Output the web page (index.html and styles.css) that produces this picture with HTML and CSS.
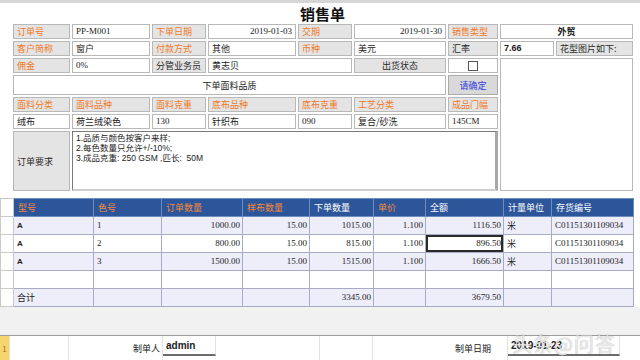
FILE: index.html
```html
<!DOCTYPE html>
<html>
<head>
<meta charset="utf-8">
<link rel="stylesheet" href="styles.css">
</head>
<body>
<div class="topbar"></div>
<h1 class="title">销售单</h1>
<div class="form">
  <div class="c lab">订单号</div>
  <div class="c num l">PP-M001</div>
  <div class="c lab">下单日期</div>
  <div class="c num">2019-01-03</div>
  <div class="c lab">交期</div>
  <div class="c num">2019-01-30</div>
  <div class="c lab">销售类型</div>
  <div class="c bold center span2">外贸</div>

  <div class="c lab">客户简称</div>
  <div class="c">窗户</div>
  <div class="c lab">付款方式</div>
  <div class="c">其他</div>
  <div class="c lab">币种</div>
  <div class="c">美元</div>
  <div class="c lab dark">汇率</div>
  <div class="c bold numb">7.66</div>
  <div class="c lab dark">花型图片如下:</div>

  <div class="c lab">佣金</div>
  <div class="c num l">0%</div>
  <div class="c lab dark">分管业务员</div>
  <div class="c span2">黄志贝</div>
  <div class="c lab dark center">出货状态</div>
  <div class="c center"><span class="check"></span></div>
  <div class="c picture"></div>

  <div class="c center quality">下单面料品质</div>
  <div class="c btn">请确定</div>

  <div class="c lab">面料分类</div>
  <div class="c lab">面料品种</div>
  <div class="c lab">面料克重</div>
  <div class="c lab">底布品种</div>
  <div class="c lab">底布克重</div>
  <div class="c lab">工艺分类</div>
  <div class="c lab">成品门幅</div>

  <div class="c">绒布</div>
  <div class="c">荷兰绒染色</div>
  <div class="c num l">130</div>
  <div class="c">针织布</div>
  <div class="c num l">090</div>
  <div class="c">复合/砂洗</div>
  <div class="c num l">145CM</div>

  <div class="c lab dark req">订单要求</div>
  <div class="c memo">
    <div>1.品质与颜色按客户来样;</div>
    <div>2.每色数量只允许+/-10%;</div>
    <div>3.成品克重: 250 GSM ,匹长:&nbsp; 50M</div>
  </div>
</div>

<table class="grid">
  <colgroup>
    <col class="w0"><col class="w1"><col class="w2"><col class="w3"><col class="w4"><col class="w5"><col class="w6"><col class="w7"><col class="w8"><col class="w9">
  </colgroup>
  <thead>
    <tr>
      <th class="rh"></th>
      <th class="o">型号</th><th class="o">色号</th><th class="o">订单数量</th><th class="o">样布数量</th><th>下单数量</th><th class="o">单价</th><th>全额</th><th>计量单位</th><th>存货编号</th>
    </tr>
  </thead>
  <tbody>
    <tr class="alt">
      <td class="rh"></td><td class="code">A</td><td class="n l">1</td><td class="n">1000.00</td><td class="n">15.00</td><td class="n">1015.00</td><td class="n">1.100</td><td class="n">1116.50</td><td>米</td><td class="n l">C01151301109034</td>
    </tr>
    <tr>
      <td class="rh"></td><td class="code">A</td><td class="n l">2</td><td class="n">800.00</td><td class="n">15.00</td><td class="n">815.00</td><td class="n">1.100</td><td class="n sel">896.50<span class="handle"></span></td><td>米</td><td class="n l">C01151301109034</td>
    </tr>
    <tr class="alt">
      <td class="rh"></td><td class="code">A</td><td class="n l">3</td><td class="n">1500.00</td><td class="n">15.00</td><td class="n">1515.00</td><td class="n">1.100</td><td class="n">1666.50</td><td>米</td><td class="n l">C01151301109034</td>
    </tr>
    <tr>
      <td class="rh"></td><td></td><td></td><td></td><td></td><td></td><td></td><td></td><td></td><td></td>
    </tr>
    <tr class="alt">
      <td class="rh"></td><td>合计</td><td></td><td></td><td></td><td class="n">3345.00</td><td></td><td class="n">3679.50</td><td></td><td></td>
    </tr>
  </tbody>
</table>

<div class="spacer"></div>

<div class="footer">
  <div class="f idx">1</div>
  <div class="f fw1"></div>
  <div class="f fw2 right">制单人</div>
  <div class="f fw3 input">admin</div>
  <div class="f fw4"></div>
  <div class="f fw5"></div>
  <div class="f fw6 right">制单日期</div>
  <div class="f fw7 input">2019-01-23</div>
  <div class="f fw8"></div>
</div>
<div class="watermark">头条@问答</div>
</body>
</html>
```
FILE: styles.css
```css
* { box-sizing: border-box; }
body {
  margin: 0;
  width: 640px;
  height: 360px;
  overflow: hidden;
  position: relative;
  background: #fff;
  font-family: "Noto Sans CJK SC", sans-serif;
  font-size: 9px;
  color: #222;
}
.topbar { height: 3px; background: #d6d6d6; }
.title {
  margin: 0;
  height: 21px;
  line-height: 21px;
  text-align: center;
  padding-left: 5px;
  font-size: 15px;
  font-weight: bold;
  color: #111;
}
.form {
  display: grid;
  grid-template-columns: 57px 78px 54px 88px 54px 92px 50px 54px 77px;
  grid-template-rows: 15px 15px 15px 20px 15px 15px 60px;
  column-gap: 2px;
  row-gap: 2px;
  margin-left: 13px;
  width: 620px;
}
.c {
  border: 1px solid #b8b8b8;
  background: #fff;
  display: flex;
  align-items: center;
  padding: 0 3px;
  white-space: nowrap;
  overflow: hidden;
  line-height: 1;
}
.lab { background: #e4e4e4; color: #f07a28; }
.lab.dark { color: #2a2a2a; }
.num {
  font-family: "Liberation Serif", serif;
  font-size: 9px;
  justify-content: flex-end;
}
.num.l { justify-content: flex-start; }
.numb { font-family: "Liberation Sans", sans-serif; font-size: 9px; }
.bold { font-weight: bold; }
.center { justify-content: center; }
.span2 { grid-column: span 2; }
.check {
  width: 10px;
  height: 10px;
  border: 1px solid #555;
  background: #fff;
}
.picture { grid-column: 8 / 10; grid-row: 3 / 8; }
.quality { grid-column: 1 / 7; }
.btn {
  background: #d9d9d9;
  border-color: #aaa;
  color: #2e3adf;
  justify-content: center;
}
.req { background: #e4e4e4; }
.memo {
  grid-column: 2 / 8;
  flex-direction: column;
  align-items: flex-start;
  justify-content: flex-start;
  padding: 1px 3px;
  border-top: 1px solid #7a7a7a;
  border-left: 1px solid #7a7a7a;
  border-right: 3px solid #a9a9a9;
  border-bottom: 2px solid #cfcfcf;
  font-family: "Liberation Sans", "Noto Sans CJK SC", sans-serif;
  font-size: 8.5px;
}
.memo div { height: 10px; line-height: 10px; }

.grid {
  margin-top: 7px;
  border-collapse: collapse;
  table-layout: fixed;
  width: 633px;
}
.w0 { width: 13px; } .w1 { width: 80px; } .w2 { width: 68px; } .w3 { width: 81px; }
.w4 { width: 67px; } .w5 { width: 64px; } .w6 { width: 52px; } .w7 { width: 78px; }
.w8 { width: 48px; } .w9 { width: 82px; }
.grid th, .grid td {
  height: 18px;
  padding: 0 3px;
  border: 1px solid #a9abc4;
  text-align: left;
  white-space: nowrap;
  overflow: hidden;
  font-weight: normal;
  line-height: 1;
}
.grid th {
  background: #2c5699;
  color: #fff;
  border-color: #6d8cc0;
  padding-left: 4px;
}
.grid th.o { color: #f5883c; }
.grid th.rh { background: #fff; border-color: #c9c9c9; }
.grid td.rh { background: #fff; border-color: #c9c9c9; }
.grid tr.alt td { background: #eeeefb; }
.grid tr.alt td.rh { background: #fff; }
.grid td.n {
  font-family: "Liberation Serif", serif;
  text-align: right;
  padding-right: 2px;
}
.grid td.n.l { text-align: left; padding-left: 3px; }
.grid td.code { font-family: "Liberation Sans", sans-serif; font-size: 8px; font-weight: bold; }
.grid td.sel {
  position: relative;
  box-shadow: inset 0 0 0 2px #2a2a2a;
}
.handle {
  position: absolute;
  right: -2px;
  bottom: -2px;
  width: 4px;
  height: 4px;
  background: #2a2a2a;
}
.spacer { height: 28px; background: #f1f1f1; }
.footer {
  display: flex;
  height: 25px;
  border-top: 1px solid #9c9c9c;
  background: #fff;
}
.f {
  height: 100%;
  border-right: 1px solid #e2e2e2;
  display: flex;
  align-items: center;
  padding: 0 3px;
  font-size: 9px;
}
.idx { width: 10px; background: #f6d66c; color: #b3651c; justify-content: center; padding: 0; font-size: 8px; }
.fw1 { width: 59px; }
.fw2 { width: 94px; padding-right: 2px; }
.fw3 { width: 53px; }
.fw4 { width: 104px; }
.fw5 { width: 53px; }
.fw6 { width: 135px; }
.fw7 { width: 112px; }
.fw8 { flex: 1; border-right: none; }
.right { justify-content: flex-end; }
.input {
  font-family: "Liberation Sans", sans-serif;
  font-weight: bold;
  font-size: 10px;
  height: 20px;
  border-bottom: 2px solid #6c6c6c;
  padding-left: 3px;
}
.fw6.right { padding-right: 16px; }
.watermark {
  position: absolute;
  left: 512px;
  top: 334px;
  font-size: 20px;
  line-height: 1;
  letter-spacing: 1px;
  color: rgba(255, 255, 255, 0.75);
  text-shadow: 0 0 1px rgba(90, 90, 90, 0.6);
}
```
